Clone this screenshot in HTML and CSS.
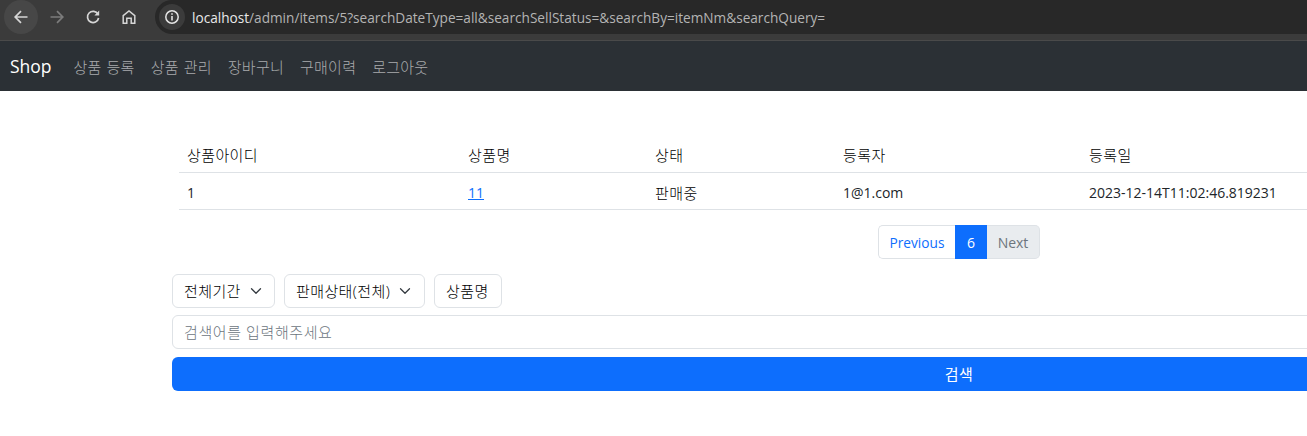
FILE: index.html
```html
<!DOCTYPE html>
<html lang="ko">
<head>
<meta charset="utf-8">
<title>Shop</title>
<link rel="stylesheet" href="styles.css">
</head>
<body>
<div class="toolbar">
  <span class="tool tool-back"><svg width="16" height="16" viewBox="0 0 16 16"><path d="M14.5 8H2.5M8 2.2 2.2 8 8 13.8" fill="none" stroke="#d6d6d6" stroke-width="1.7"/></svg></span>
  <span class="tool tool-fwd"><svg width="16" height="16" viewBox="0 0 16 16"><path d="M1.5 8h12M8 2.2 13.8 8 8 13.8" fill="none" stroke="#7c7c7c" stroke-width="1.7"/></svg></span>
  <span class="tool tool-reload"><svg width="16" height="16" viewBox="0 0 16 16"><path d="M13 5.2A5.6 5.6 0 1 0 13.6 9" fill="none" stroke="#d6d6d6" stroke-width="1.7"/><path d="M14.2 1.6V6.4H9.4Z" fill="#d6d6d6"/></svg></span>
  <span class="tool tool-home"><svg width="16" height="16" viewBox="0 0 16 16"><path d="M2.2 14.3V6.6L8 1.9l5.8 4.7v7.7h-3.6V9.2H5.8v5.1Z" fill="none" stroke="#d6d6d6" stroke-width="1.5"/></svg></span>
  <div class="omnibox">
    <span class="site-info"><svg width="16" height="16" viewBox="0 0 16 16"><circle cx="8" cy="8" r="6.2" fill="none" stroke="#e4e4e4" stroke-width="1.5"/><path d="M8 7v4.4M8 4.3v1.5" stroke="#e4e4e4" stroke-width="1.6"/></svg></span>
    <span class="url"><span class="url-host">localhost</span>/admin/items/5?searchDateType=all&amp;searchSellStatus=&amp;searchBy=itemNm&amp;searchQuery=</span>
  </div>
</div>
<nav class="navbar">
  <a class="brand">Shop</a>
  <a class="nav-link ko">상품 등록</a>
  <a class="nav-link ko">상품 관리</a>
  <a class="nav-link ko">장바구니</a>
  <a class="nav-link ko">구매이력</a>
  <a class="nav-link ko">로그아웃</a>
</nav>
<main class="content">
  <table class="items">
    <thead>
      <tr><th class="c1 ko">상품아이디</th><th class="c2 ko">상품명</th><th class="c3 ko">상태</th><th class="c4 ko">등록자</th><th class="c5 ko">등록일</th></tr>
    </thead>
    <tbody>
      <tr><td>1</td><td><a class="item-link">11</a></td><td class="ko">판매중</td><td>1@1.com</td><td>2023-12-14T11:02:46.819231</td></tr>
    </tbody>
  </table>
  <div class="pager">
    <ul class="pagination">
      <li class="page page-prev">Previous</li>
      <li class="page page-active">6</li>
      <li class="page page-next">Next</li>
    </ul>
  </div>
  <form class="search">
    <div class="filters">
      <span class="select select-date ko">전체기간<svg class="chev" width="12" height="12" viewBox="0 0 16 16"><path d="m2 5 6 6 6-6" fill="none" stroke="#343a40" stroke-width="1.7" stroke-linecap="round" stroke-linejoin="round"/></svg></span>
      <span class="select select-status ko">판매상태(전체)<svg class="chev" width="12" height="12" viewBox="0 0 16 16"><path d="m2 5 6 6 6-6" fill="none" stroke="#343a40" stroke-width="1.7" stroke-linecap="round" stroke-linejoin="round"/></svg></span>
      <span class="select select-by ko">상품명</span>
    </div>
    <div class="query ko">검색어를 입력해주세요</div>
    <div class="submit ko">검색</div>
  </form>
</main>
</body>
</html>
```
FILE: styles.css
```css
* { box-sizing: border-box; }
html, body { margin: 0; padding: 0; height: 436px; overflow: hidden; background: #fff; }
body { width: 1307px; font-family: "Open Sans", "Noto Sans CJK KR", sans-serif; font-size: 14px; color: #212529; }

.toolbar { height: 41px; background: #3b3b3b; border-bottom: 1px solid #4a4a4a; display: flex; align-items: flex-start; }
.tool { width: 34px; height: 34px; flex: none; display: flex; align-items: center; justify-content: center; border-radius: 50%; }
.tool-back { margin-left: 4px; background: #474747; }
.tool-fwd { margin-left: 2px; }
.tool-reload { margin-left: 2px; }
.tool-home { margin-left: 2px; }
.omnibox { margin-left: 9px; flex: 1; height: 34px; background: #282828; border-radius: 17px 0 0 17px; display: flex; align-items: center; padding-left: 4px; }
.site-info { width: 26px; height: 26px; border-radius: 50%; background: #3b3b3b; display: flex; align-items: center; justify-content: center; }
.url { margin-left: 7px; font-family: "Open Sans", sans-serif; font-size: 13.64px; color: #b4b4b4; white-space: nowrap; }
.url-host { color: #e8e8e8; }

.navbar { height: 50px; background: #2b3035; display: flex; align-items: center; padding-left: 10px; }
.brand { font-size: 17.5px; color: #fff; margin-right: 14px; }
.ko { font-size: 15px; letter-spacing: .4px; font-weight: 300; }
.nav-link { color: rgba(255,255,255,.6); padding: 0 8px; white-space: nowrap; letter-spacing: .25px; word-spacing: .75px; }

.content { width: 1574px; margin-left: 172px; padding-top: 44px; }
.items { width: 1567px; margin-left: 7px; border-collapse: collapse; table-layout: fixed; }
.items th, .items td { height: 37px; padding: 0 8px; text-align: left; border-bottom: 1px solid #dee2e6; color: #000; }
.items th { font-weight: 300; padding-top: 2px; }
.items td { font-weight: 400; padding-top: 3px; color: #212529; }
.items td.ko { font-weight: 300; color: #000; }
.c1 { width: 281px; } .c2 { width: 187px; } .c3 { width: 188px; } .c4 { width: 246px; }
.item-link { color: #0d6efd; text-decoration: underline; }

.pager { margin-top: 15px; padding-left: 706px; }
.pagination { list-style: none; margin: 0; padding: 0; display: flex; height: 34px; width: 162px; }
.page { display: flex; align-items: center; justify-content: center; border: 1px solid #dee2e6; padding-top: 2px; }
.page-prev { width: 77px; color: #0d6efd; border-radius: 5px 0 0 5px; border-right: 0; font-size: 13.7px; }
.page-active { width: 32px; background: #0d6efd; color: #fff; border-color: #0d6efd; }
.page-next { width: 53px; background: #e9ecef; color: #6c757d; border-radius: 0 5px 5px 0; border-left: 0; }

.search { margin-top: 15px; }
.filters { display: flex; height: 34px; }
.select { display: flex; align-items: center; height: 34px; border: 1px solid #dee2e6; border-radius: 6px; padding-left: 11px; color: #000; }
.select-date { width: 103px; }
.select-status { width: 141px; margin-left: 9px; }
.select-by { width: 68px; margin-left: 9px; }
.chev { margin-left: 9px; }
.query { margin-top: 7px; height: 34px; border: 1px solid #dee2e6; border-radius: 6px; padding-left: 11px; display: flex; align-items: center; color: #6c757d; letter-spacing: .6px; }
.submit { margin-top: 8px; height: 34px; background: #0d6efd; color: #fff; border-radius: 6px; display: flex; align-items: center; justify-content: center; font-weight: 400; }
```
